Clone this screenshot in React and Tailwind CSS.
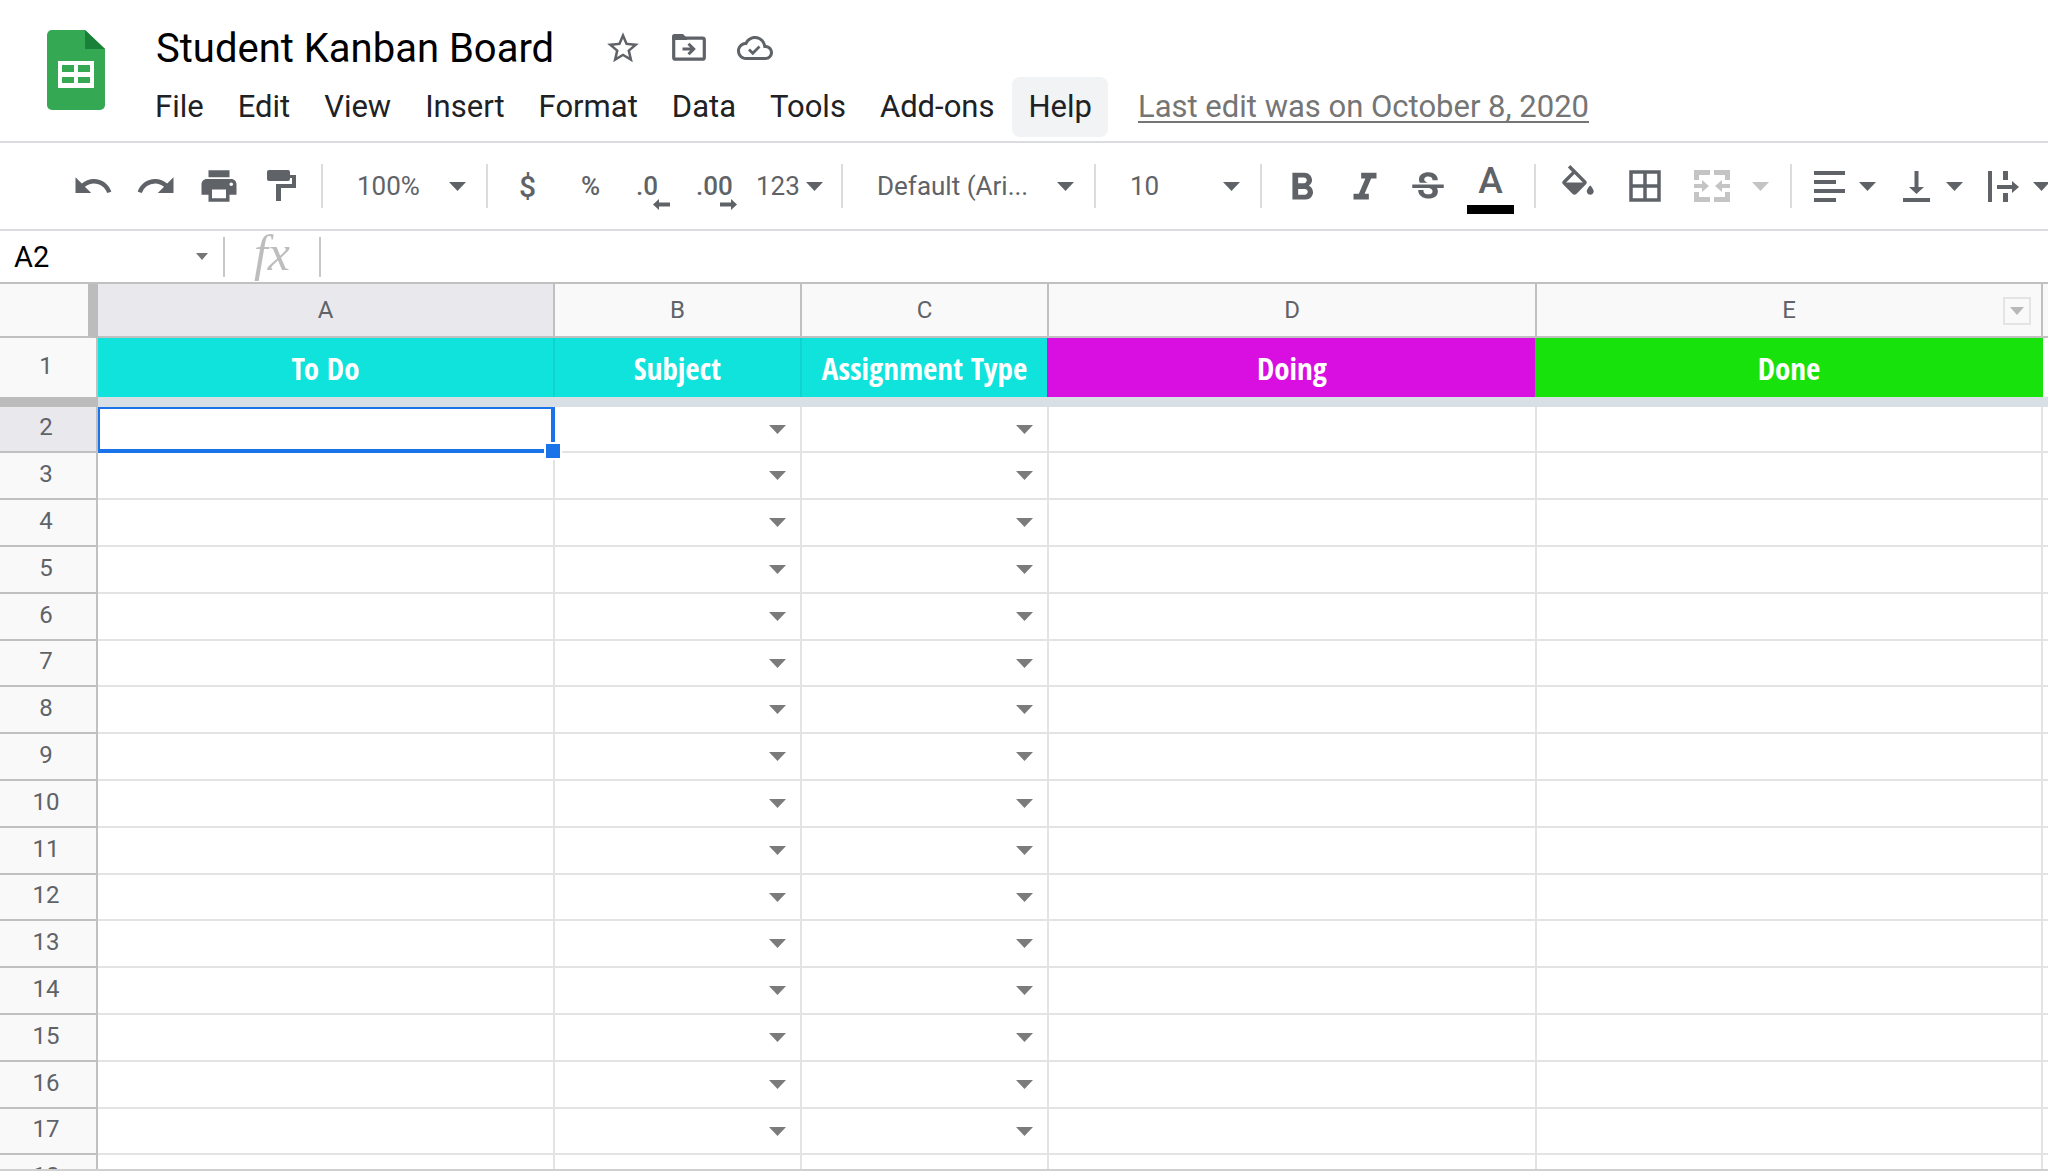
import { useState } from 'react';
import {
  MdBorderAll,
  MdFormatBold,
  MdFormatItalic,
  MdPrint,
  MdRedo,
  MdStarBorder,
  MdStrikethroughS,
  MdUndo,
} from 'react-icons/md';

const menus = ['File', 'Edit', 'View', 'Insert', 'Format', 'Data', 'Tools', 'Add-ons', 'Help'];

const columns = [
  { id: 'A', title: 'To Do', color: 'bg-[#10e2dc] border-[#0fd3cd]' },
  { id: 'B', title: 'Subject', color: 'bg-[#10e2dc] border-[#0fd3cd]', dropdown: true },
  { id: 'C', title: 'Assignment Type', color: 'bg-[#10e2dc] border-[#d80fe0]', dropdown: true },
  { id: 'D', title: 'Doing', color: 'bg-[#d80fe0] border-[#18e20c]' },
  { id: 'E', title: 'Done', color: 'bg-[#18e20c] border-[#18e20c]' },
];

const rows = Array.from({ length: 17 }, (_, i) => i + 2);

function Arrow({ className = 'w-[17px] h-[9px] text-[#5f6368]' }) {
  return (
    <svg viewBox="0 0 18 9" preserveAspectRatio="none" className={`shrink-0 ${className}`} fill="currentColor" aria-hidden="true">
      <path d="M0 0h18L9 9z" />
    </svg>
  );
}

function SheetsLogo() {
  return (
    <svg viewBox="0 0 58 80" className="w-[58px] h-20" aria-hidden="true">
      <path d="M5 0h33l20 19v56a5 5 0 0 1-5 5H5a5 5 0 0 1-5-5V5a5 5 0 0 1 5-5z" fill="#34a853" />
      <path d="M38 0l20 19H38z" fill="#188038" />
      <path d="M11 31h36v27H11zM15 35v7h12v-7zM31 35v7h12v-7zM15 47v6h12v-6zM31 47v6h12v-6z" fill="#fff" fillRule="evenodd" />
    </svg>
  );
}

function MoveIcon() {
  return (
    <svg viewBox="0 0 34 27" className="w-[34px] h-[27px]" fill="none" stroke="currentColor" aria-hidden="true">
      <rect x="1.7" y="4.2" width="30.6" height="21" rx="1.8" strokeWidth="3.2" />
      <path d="M0 6V2.500a2.500 2.500 0 0 1 2.500-2.500h8.500l4 4v2z" fill="currentColor" stroke="none" />
      <path d="M10.500 15h10.500M16.500 9.800l5.200 5.200-5.200 5.200" strokeWidth="3" />
    </svg>
  );
}

function CloudIcon() {
  return (
    <svg viewBox="0 4 24 16" className="w-9 h-6" fill="currentColor" aria-hidden="true">
      <path d="M19.350 10.040C18.670 6.590 15.640 4 12 4 9.110 4 6.600 5.640 5.350 8.040 2.340 8.360 0 10.910 0 14c0 3.310 2.690 6 6 6h13c2.760 0 5-2.240 5-5 0-2.640-2.050-4.780-4.650-4.960zM19 18H6c-2.210 0-4-1.790-4-4 0-2.050 1.530-3.760 3.560-3.970l1.070-.11.5-.95C8.080 7.140 9.940 6 12 6c2.620 0 4.880 1.860 5.390 4.430l.3 1.500 1.530.11c1.560.1 2.780 1.410 2.780 2.960 0 1.650-1.350 3-3 3z" />
      <path d="M8 13l2.500 2.500 4.500-4.500" fill="none" stroke="currentColor" strokeWidth="1.800" />
    </svg>
  );
}

function PaintIcon() {
  return (
    <svg viewBox="0 0 30 32" className="w-[30px] h-8" fill="currentColor" aria-hidden="true">
      <rect x="0" y="0" width="23" height="11" rx="2" />
      <path d="M22 5h7v13H14v13H9V14h16V8h-3z" />
    </svg>
  );
}

function FillIcon() {
  return (
    <svg viewBox="0 0 24 24" className="size-[42px]" fill="currentColor" aria-hidden="true">
      <path d="M16.560 8.940 7.620 0 6.210 1.410l2.380 2.380-5.150 5.150c-.59.59-.59 1.540 0 2.120l5.500 5.500c.29.29.68.44 1.060.44s.77-.15 1.060-.44l5.500-5.500c.59-.58.59-1.530 0-2.120zM5.210 10 10 5.210 14.790 10H5.210zM19 11.500s-2 2.170-2 3.500c0 1.100.9 2 2 2s2-.9 2-2c0-1.330-2-3.500-2-3.500z" />
    </svg>
  );
}

function MergeIcon() {
  return (
    <svg viewBox="0 0 36 32" className="w-9 h-8" fill="currentColor" aria-hidden="true">
      <path d="M0 0h16v5H5v5H0zM20 0h16v10h-5V5H20zM0 22h5v5h11v5H0zM31 22h5v10H20v-5h11z" />
      <path d="M0 14h8v-4l7 6-7 6v-4H0zM36 14h-8v-4l-7 6 7 6v-4h8z" />
    </svg>
  );
}

function AlignIcon() {
  return (
    <svg viewBox="0 0 31 31" className="size-[31px]" fill="currentColor" aria-hidden="true">
      <path d="M0 0h31v4H0zM0 9h22v4H0zM0 18h31v4H0zM0 27h22v4H0z" />
    </svg>
  );
}

function BottomIcon() {
  return (
    <svg viewBox="0 0 31 31" className="size-[31px]" fill="currentColor" aria-hidden="true">
      <path d="M2 27h27v4H2zM13.500 0h4v16h5.500l-7.500 7-7.500-7h5.500z" />
    </svg>
  );
}

function OverflowIcon() {
  return (
    <svg viewBox="0 0 31 31" className="size-[31px]" fill="currentColor" aria-hidden="true">
      <path d="M0 0h4v31H0zM15 0h5v9h-5zM15 22h5v9h-5zM9 14h15v-4l7 6-7 6v-4H9z" />
    </svg>
  );
}

function SmallArrow({ flip }) {
  return (
    <svg viewBox="0 0 17 11" className={`w-[17px] h-[11px] ${flip ? 'rotate-180' : ''}`} fill="currentColor" aria-hidden="true">
      <path d="M0 5.500L6 0v3.500h11v4H6V11z" />
    </svg>
  );
}

function Tool({ label, children, className = 'w-[63px] justify-center' }) {
  return (
    <button aria-label={label} className={`h-14 shrink-0 flex items-center rounded hover:bg-gray-100 ${className}`}>
      {children}
    </button>
  );
}

function ToolSelect({ label, value, className }) {
  return (
    <div className={`relative shrink-0 ${className}`}>
      <select aria-label={label} className="w-full h-14 pl-[26px] appearance-none bg-transparent outline-none">
        <option>{value}</option>
      </select>
      <Arrow className="absolute right-3 top-6 w-[17px] h-[9px] pointer-events-none" />
    </div>
  );
}

function Separator() {
  return <div className="w-[2px] h-11 mx-2 shrink-0 bg-[#dadce0]" />;
}

function Header({ title }) {
  return (
    <header className="flex h-[143px] shrink-0 border-b-2 border-[#dadce0] pl-[47px] pt-[18px]">
      <div className="pt-3">
        <SheetsLogo />
      </div>
      <div className="pl-[34px]">
        <div className="flex items-center h-[59px] pl-[17px]">
          <h1 className="text-[40px] leading-[56px] pt-[2px] text-black">{title}</h1>
          <div className="flex ml-9 text-[#5f6368]">
            <button aria-label="Star" className="w-[66px] h-12 flex items-center justify-center">
              <MdStarBorder className="size-[38px]" />
            </button>
            <button aria-label="Move" className="w-[66px] h-12 flex items-center justify-center">
              <MoveIcon />
            </button>
            <button aria-label="Document status" className="w-[66px] h-12 flex items-center justify-center">
              <CloudIcon />
            </button>
          </div>
        </div>
        <nav className="flex items-center gap-[2px] text-[31px] leading-[60px] text-[#202124]">
          {menus.map((name) => (
            <button
              key={name}
              className={name === 'Help' ? 'h-[60px] px-4 rounded-lg bg-[#f1f3f4]' : 'h-[60px] px-4 rounded-lg'}
            >
              {name}
            </button>
          ))}
          <a href="#history" className="ml-7 text-[#757575] underline decoration-2 underline-offset-4">
            Last edit was on October 8, 2020
          </a>
        </nav>
      </div>
    </header>
  );
}

function Toolbar() {
  return (
    <div className="flex items-center h-[88px] shrink-0 overflow-hidden border-b-2 border-[#dadce0] pl-[61px] text-[26px] text-[#5f6368]">
      <Tool label="Undo"><MdUndo className="size-[42px]" /></Tool>
      <Tool label="Redo"><MdRedo className="size-[42px]" /></Tool>
      <Tool label="Print"><MdPrint className="size-[42px]" /></Tool>
      <Tool label="Paint format"><PaintIcon /></Tool>
      <Separator />
      <ToolSelect label="Zoom" value="100%" className="w-[147px]" />
      <Separator />
      <Tool label="Format as currency"><span className="text-[30px] font-medium">$</span></Tool>
      <Tool label="Format as percent"><span className="font-medium">%</span></Tool>
      <Tool label="Decrease decimal places" className="w-[60px] pl-[14px]">
        <span className="relative font-medium">
          .0
          <span className="absolute -right-3 -bottom-1"><SmallArrow /></span>
        </span>
      </Tool>
      <Tool label="Increase decimal places" className="w-[60px] pl-[14px]">
        <span className="relative font-medium">
          .00
          <span className="absolute -right-1 -bottom-1"><SmallArrow flip /></span>
        </span>
      </Tool>
      <Tool label="More formats" className="w-[91px] pl-[14px] gap-[6px]">
        123
        <Arrow />
      </Tool>
      <Separator />
      <ToolSelect label="Font" value="Default (Ari..." className="w-[235px]" />
      <Separator />
      <ToolSelect label="Font size" value="10" className="w-[148px]" />
      <Separator />
      <div className="flex shrink-0 mr-1">
        <Tool label="Bold"><MdFormatBold className="size-[46px] mt-1" /></Tool>
        <Tool label="Italic"><MdFormatItalic className="size-[46px] mt-1" /></Tool>
        <Tool label="Strikethrough"><MdStrikethroughS className="size-[42px] mt-1" /></Tool>
        <Tool label="Text color">
          <span className="flex flex-col items-center gap-2 pt-[6px]">
            <span className="text-[37px] leading-[32px] font-medium">A</span>
            <span className="w-[47px] h-[9px] bg-black" />
          </span>
        </Tool>
      </div>
      <Separator />
      <Tool label="Fill color" className="w-[67px] justify-center"><FillIcon /></Tool>
      <Tool label="Borders" className="w-[67px] justify-center"><MdBorderAll className="size-[42px]" /></Tool>
      <Tool label="Merge cells" className="w-[67px] justify-center text-[#c4c4c4]"><MergeIcon /></Tool>
      <Tool label="Merge type" className="w-[37px] pl-[7px] text-[#c4c4c4]"><Arrow className="w-[17px] h-[9px]" /></Tool>
      <Separator />
      <Tool label="Horizontal align" className="w-[87px] pl-[14px] gap-[14px]"><AlignIcon /><Arrow /></Tool>
      <Tool label="Vertical align" className="w-[87px] pl-[14px] gap-[14px]"><BottomIcon /><Arrow /></Tool>
      <Tool label="Text wrapping" className="w-[87px] pl-[14px] gap-[14px]"><OverflowIcon /><Arrow /></Tool>
    </div>
  );
}

function FormulaBar({ cell, onCellChange }) {
  const [formula, setFormula] = useState('');

  return (
    <div className="flex items-center h-[51px] shrink-0">
      <input
        aria-label="Name box"
        value={cell}
        onChange={(e) => onCellChange(e.target.value)}
        className="w-[180px] pl-[14px] text-[29px] leading-[50px] text-black outline-none"
      />
      <button aria-label="Named ranges" className="w-[43px] h-full flex items-center justify-center">
        <Arrow className="w-3 h-[7px] text-[#757575]" />
      </button>
      <div className="w-[2px] h-10 bg-[#c8c8c8]" />
      <label htmlFor="formula" className="w-[94px] pb-2 text-center font-['Liberation_Serif',serif] italic text-[50px] leading-[44px] text-[#bdbdbd]">
        fx
      </label>
      <div className="w-[2px] h-10 bg-[#c8c8c8]" />
      <input
        id="formula"
        value={formula}
        onChange={(e) => setFormula(e.target.value)}
        className="flex-1 px-4 text-[26px] outline-none"
      />
    </div>
  );
}

function Cell({ column, row, selected }) {
  return (
    <td className="relative p-0 border-r-2 border-b-2 border-[#e2e3e3]">
      {column.dropdown && (
        <>
          <select aria-label={`${column.title} ${row}`} className="absolute inset-0 size-full appearance-none bg-transparent outline-none">
            <option></option>
          </select>
          <Arrow className="relative ml-auto mr-[14px] w-[17px] h-[9px] text-[#7b7b7b] pointer-events-none" />
        </>
      )}
      {selected && (
        <div className="absolute top-0 left-0 -right-[2px] -bottom-[2px] z-10 border-t-2 border-l-2 border-r-4 border-b-4 border-[#1a73e8]">
          <div className="absolute -right-[11px] -bottom-[11px] size-[18px] border-2 border-white bg-[#1a73e8]" />
        </div>
      )}
    </td>
  );
}

function Sheet({ selectedCell }) {
  return (
    <main className="flex-1 min-h-0 overflow-hidden border-t-2 border-[#c0c0c0]">
      <table className="w-full table-fixed border-separate border-spacing-0 text-[24px] text-[#5f6368]">
        <colgroup>
          <col className="w-[98px]" />
          <col className="w-[457px]" />
          <col className="w-[247px]" />
          <col className="w-[247px]" />
          <col className="w-[488px]" />
          <col className="w-[506px]" />
          <col />
        </colgroup>
        <thead>
          <tr className="h-[54px] bg-[#f9f9fa]">
            <td className="p-0 border-r-[10px] border-b-2 border-r-[#bcbcbc] border-b-[#c0c0c0]" />
            {columns.map((col) => (
              <th
                key={col.id}
                scope="col"
                className={`relative p-0 font-normal border-r-2 border-b-2 border-[#c0c0c0] ${selectedCell[0] === col.id ? 'bg-[#e8e8ed]' : ''}`}
              >
                {col.id}
                {col.id === 'E' && (
                  <button aria-label="Column menu" className="absolute right-[10px] top-[13px] w-7 h-7 flex items-center justify-center border-2 border-[#e4e4e4]">
                    <Arrow className="w-[14px] h-2 text-[#b8b8b8]" />
                  </button>
                )}
              </th>
            ))}
            <td className="p-0 border-b-2 border-[#c0c0c0]" />
          </tr>
        </thead>
        <tbody>
          <tr className="h-[59px]">
            <th scope="row" className="p-0 pr-1 pb-1 font-normal bg-[#f9f9fa] border-r-2 border-[#c0c0c0]">1</th>
            {columns.map((col) => (
              <td
                key={col.id}
                className={`p-0 text-center whitespace-nowrap font-['Liberation_Sans_Narrow','Open_Sans_Condensed',sans-serif] font-bold text-[31px] leading-[56px] text-white border-r-2 ${col.color}`}
              >
                {col.title}
              </td>
            ))}
            <td className="p-0" />
          </tr>
          {/* frozen row divider */}
          <tr className="h-[10px]" aria-hidden="true">
            <td className="p-0 bg-[#bcbcbc]" />
            <td colSpan={6} className="p-0 bg-[#d8dfe5]" />
          </tr>
          {rows.map((row) => (
            <tr key={row} className={row % 5 === 2 ? 'h-[46px]' : 'h-[47px]'}>
              <th
                scope="row"
                className={`p-0 pr-1 pb-1 font-normal leading-[40px] border-r-2 border-b-2 border-[#c0c0c0] ${selectedCell.slice(1) === String(row) ? 'bg-[#e8e8ed]' : 'bg-[#f9f9fa]'}`}
              >
                {row}
              </th>
              {columns.map((col) => (
                <Cell key={col.id} column={col} row={row} selected={selectedCell === `${col.id}${row}`} />
              ))}
              <td className="p-0 border-b-2 border-[#e2e3e3]" />
            </tr>
          ))}
        </tbody>
      </table>
    </main>
  );
}

export default function App() {
  const [cell, setCell] = useState('A2');

  return (
    <div className="flex flex-col h-screen overflow-hidden border-b-2 border-[#cfcfcf] bg-white font-[Roboto,sans-serif]">
      <Header title="Student Kanban Board" />
      <Toolbar />
      <FormulaBar cell={cell} onCellChange={setCell} />
      <Sheet selectedCell={cell} />
    </div>
  );
}
